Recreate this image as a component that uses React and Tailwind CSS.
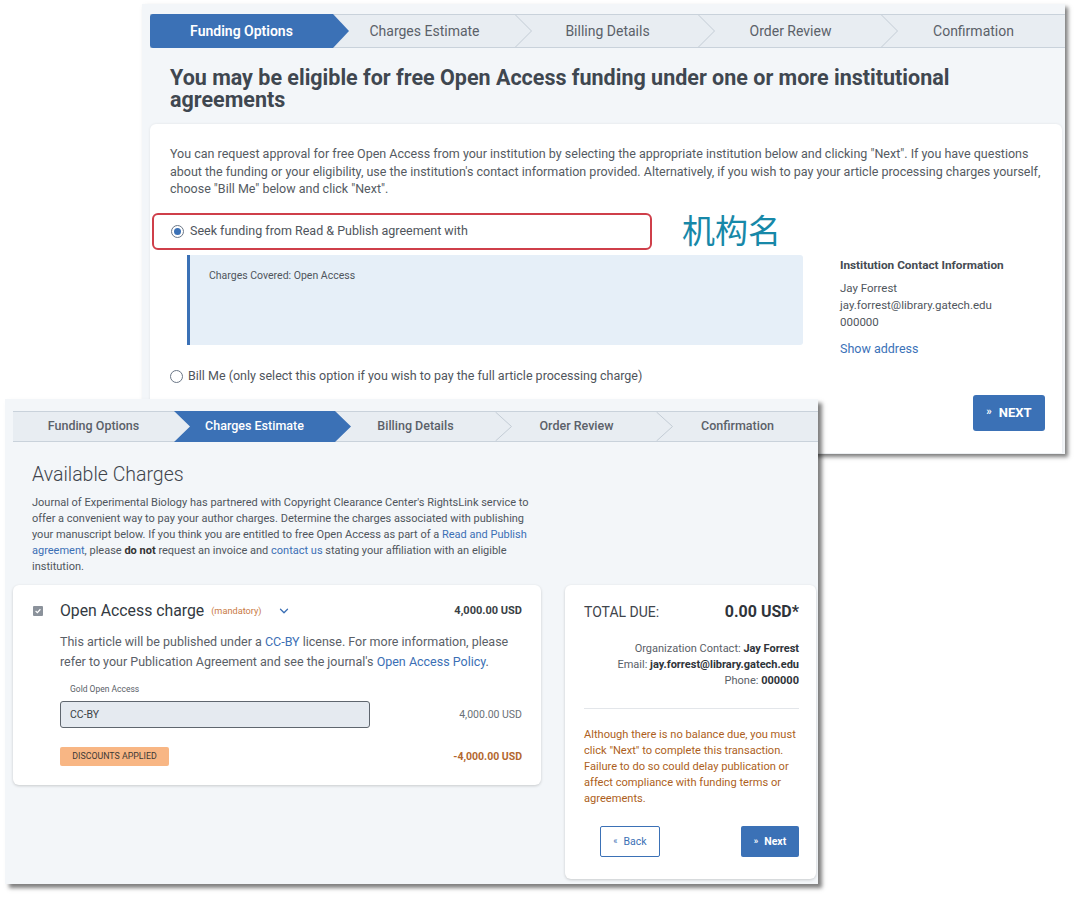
import React from "react";
import { ChevronDown } from "lucide-react";

function Stepper({ steps, active, heightCls, textCls, activeTextCls }) {
  const n = steps.length;
  return (
    <div className={`flex border-y border-[#c9d2db] bg-[#e8edf2] ${heightCls}`}>
      {steps.map((s, i) => (
        <div key={s} className="relative flex flex-1 items-center justify-center">
          {i === active && i === 0 && (
            <div className="absolute -top-px -bottom-px left-0 -right-[16px] rounded-l-[3px] bg-[#3b71b6] [clip-path:polygon(0_0,calc(100%_-_16px)_0,100%_50%,calc(100%_-_16px)_100%,0_100%)]" />
          )}
          {i === active && i !== 0 && (
            <div className="absolute -top-px -bottom-px left-0 -right-[16px] bg-[#3b71b6] [clip-path:polygon(0_0,calc(100%_-_16px)_0,100%_50%,calc(100%_-_16px)_100%,0_100%,16px_50%)]" />
          )}
          {i !== active && i !== active - 1 && i < n - 1 && (
            <svg
              className="absolute top-0 -right-[16px] h-full w-[17px]"
              viewBox="0 0 17 32"
              preserveAspectRatio="none"
            >
              <polyline
                points="0.5,0 16.5,16 0.5,32"
                fill="none"
                stroke="#c3ccd5"
                strokeWidth="1"
                vectorEffect="non-scaling-stroke"
              />
            </svg>
          )}
          <span className={`relative ${i === active ? activeTextCls : textCls}`}>{s}</span>
        </div>
      ))}
    </div>
  );
}

const STEPS = ["Funding Options", "Charges Estimate", "Billing Details", "Order Review", "Confirmation"];

function Radio({ checked }) {
  return (
    <span className="flex h-[13px] w-[13px] shrink-0 items-center justify-center rounded-full border border-[#6b7787] bg-white">
      {checked && <span className="h-[7px] w-[7px] rounded-full bg-[#3b71b6]" />}
    </span>
  );
}

function WindowA() {
  return (
    <div className="absolute left-[142px] top-[4px] h-[450px] w-[923px] bg-[#f3f6f9] pl-[8px] pt-[10px] shadow-[3px_3px_4px_rgba(0,0,0,0.5)]">
      <Stepper
        steps={STEPS}
        active={0}
        heightCls="h-[34px]"
        textCls="text-[14px] text-[#5b6169]"
        activeTextCls="text-[14px] font-semibold text-white"
      />
      <h1 className="mt-[19px] h-[44px] pl-[20px] text-[21.5px] font-bold leading-[22px] text-[#3f4750]">
        You may be eligible for free Open Access funding under one or more institutional
        <br />
        agreements
      </h1>
      <div className="mr-[3px] mt-[13px] h-[329px] rounded-t-md bg-white pl-[20px] pr-[17px] pt-[21px] shadow-[0_0_3px_rgba(0,0,0,0.08)]">
        <p className="text-[12.5px] leading-[17.5px] text-[#555b62]">
          You can request approval for free Open Access from your institution by selecting the appropriate institution below and clicking "Next". If you have questions
          <br />
          about the funding or your eligibility, use the institution's contact information provided. Alternatively, if you wish to pay your article processing charges yourself,
          <br />
          choose "Bill Me" below and click "Next".
        </p>
        <div className="relative mt-[15px]">
          <div className="-ml-[18px] flex h-[37px] w-[500px] items-center gap-[6px] rounded-md border-2 border-[#cf3f4a] pl-[17px] text-[12.5px] text-[#4f555c]">
            <Radio checked />
            <span>Seek funding from Read &amp; Publish agreement with</span>
          </div>
          <span className="absolute left-[512px] top-[-4px] font-['Noto_Sans_CJK_SC',sans-serif] text-[33px] leading-[40px] text-[#1788a8]">
            机构名
          </span>
        </div>
        <div className="mt-[5px] flex h-[90px] items-start">
          <div className="ml-[17px] h-[90px] w-[616px] rounded-r-[3px] border-l-[3px] border-[#3b71b6] bg-[#e6eff8] pl-[19px] pt-[13px] text-[10.5px] text-[#4f555c]">
            Charges Covered: Open Access
          </div>
          <div className="ml-[37px] pt-[2px] text-[#50565d]">
            <div className="text-[11.8px] font-bold text-[#454b52]">Institution Contact Information</div>
            <div className="mt-[6px] text-[11.5px] leading-[17px]">
              Jay Forrest
              <br />
              jay.forrest@library.gatech.edu
              <br />
              000000
            </div>
            <div className="mt-[9px] text-[12.5px] text-[#3b72b8]">Show address</div>
          </div>
        </div>
        <div className="mt-[23px] flex h-[18px] items-center gap-[5px] text-[12.5px] text-[#4f555c]">
          <Radio />
          <span>Bill Me (only select this option if you wish to pay the full article processing charge)</span>
        </div>
        <div className="mt-[9px] flex justify-end">
          <button className="flex h-[36px] w-[72px] items-center justify-center gap-[7px] rounded-[3px] bg-[#3b71b6] text-[13px] font-bold text-white">
            <span className="text-[11px]">»</span>
            <span>NEXT</span>
          </button>
        </div>
      </div>
    </div>
  );
}

function WindowB() {
  return (
    <div className="absolute left-[5px] top-[399px] h-[485px] w-[813px] bg-[#f3f6f9] pl-[8px] pt-[12px] shadow-[4px_4px_4px_rgba(0,0,0,0.5)]">
      <Stepper
        steps={STEPS}
        active={1}
        heightCls="h-[31px]"
        textCls="text-[12.5px] font-medium text-[#5b6169]"
        activeTextCls="text-[12.5px] font-medium text-white"
      />
      <div className="pl-[19px]">
        <h2 className="mt-[20px] text-[19.5px] font-light leading-[26px] text-[#3f454c]">Available Charges</h2>
        <p className="mt-[7px] text-[11px] leading-[16px] text-[#4f555c]">
          Journal of Experimental Biology has partnered with Copyright Clearance Center's RightsLink service to
          <br />
          offer a convenient way to pay your author charges. Determine the charges associated with publishing
          <br />
          your manuscript below. If you think you are entitled to free Open Access as part of a{" "}
          <span className="text-[#3b6fb5]">Read and Publish</span>
          <br />
          <span className="text-[#3b6fb5]">agreement</span>, please <b className="text-[#333]">do not</b> request an invoice and{" "}
          <span className="text-[#3b6fb5]">contact us</span> stating your affiliation with an eligible
          <br />
          institution.
        </p>
      </div>
      <div className="mt-[10px] flex items-start gap-[24px]">
        <div className="w-[528px] rounded-md bg-white pb-[19px] pl-[20px] pr-[19px] pt-[15px] shadow-[0_1px_3px_rgba(0,0,0,0.18)]">
          <div className="flex h-[22px] items-center">
            <span className="flex h-[10px] w-[10px] items-center justify-center rounded-[1px] bg-[#8b929b]">
              <svg viewBox="0 0 10 10" className="h-[8px] w-[8px]">
                <polyline points="2,5 4.2,7 8,2.8" fill="none" stroke="#fff" strokeWidth="1.5" />
              </svg>
            </span>
            <span className="ml-[17px] text-[15.8px] text-[#333a42]">Open Access charge</span>
            <span className="ml-[7px] text-[9.2px] text-[#c97a45]">(mandatory)</span>
            <ChevronDown className="ml-[15px] h-[14px] w-[14px] text-[#3b6fb5]" strokeWidth={2.2} />
            <span className="ml-auto text-[11px] font-bold text-[#3a3f45]">4,000.00 USD</span>
          </div>
          <div className="pl-[27px]">
            <p className="mt-[10px] text-[12.5px] leading-[20px] text-[#5a6067]">
              This article will be published under a <span className="text-[#3b6fb5]">CC-BY</span> license. For more information, please
              <br />
              refer to your Publication Agreement and see the journal's{" "}
              <span className="text-[#3b6fb5]">Open Access Policy</span>.
            </p>
            <div className="mt-[11px] pl-[10px] text-[8.5px] leading-[12px] text-[#5a6067]">Gold Open Access</div>
            <div className="mt-[6px] flex items-center">
              <div className="flex h-[27px] w-[310px] items-center rounded-[3px] border border-[#5f666e] bg-[#e5eaf0] pl-[9px] text-[10.5px] text-[#3a3f45]">
                CC-BY
              </div>
              <span className="ml-auto text-[10.5px] text-[#6a7077]">4,000.00 USD</span>
            </div>
            <div className="mt-[19px] flex items-center">
              <span className="flex h-[19px] w-[109px] items-center justify-center rounded-[2px] bg-[#f8b684] text-[8.8px] text-[#3d3a36]">
                DISCOUNTS APPLIED
              </span>
              <span className="ml-auto text-[10.5px] font-bold text-[#b3682f]">-4,000.00 USD</span>
            </div>
          </div>
        </div>
        <div className="w-[251px] rounded-md bg-white pb-[22px] pl-[19px] pr-[17px] pt-[17px] shadow-[0_1px_3px_rgba(0,0,0,0.18)]">
          <div className="flex h-[20px] items-center justify-between">
            <span className="text-[14px] text-[#3f454c]">TOTAL DUE:</span>
            <span className="text-[16px] font-bold text-[#2f343a]">0.00 USD*</span>
          </div>
          <div className="mt-[19px] text-right text-[11px] leading-[16px] text-[#5a6067]">
            Organization Contact: <b className="text-[#2f343a]">Jay Forrest</b>
            <br />
            Email: <b className="text-[#2f343a]">jay.forrest@library.gatech.edu</b>
            <br />
            Phone: <b className="text-[#2f343a]">000000</b>
          </div>
          <div className="mt-[19px] border-t border-[#e3e6ea]" />
          <p className="mt-[18px] text-[11.1px] leading-[16px] text-[#ad5f22]">
            Although there is no balance due, you must
            <br />
            click "Next" to complete this transaction.
            <br />
            Failure to do so could delay publication or
            <br />
            affect compliance with funding terms or
            <br />
            agreements.
          </p>
          <div className="mt-[19px] flex items-center justify-between pl-[16px]">
            <button className="flex h-[31px] w-[60px] items-center justify-center gap-[6px] rounded-[2px] border border-[#3b71b6] bg-white text-[10.5px] text-[#3b6fb5]">
              <span className="text-[9px]">«</span>
              <span>Back</span>
            </button>
            <button className="flex h-[31px] w-[58px] items-center justify-center gap-[6px] rounded-[2px] bg-[#3b71b6] text-[10.5px] font-bold text-white">
              <span className="text-[9px]">»</span>
              <span>Next</span>
            </button>
          </div>
        </div>
      </div>
    </div>
  );
}

export default function App() {
  return (
    <div className="relative h-[898px] w-[1080px] overflow-hidden bg-white font-[Roboto,sans-serif]">
      <WindowA />
      <WindowB />
    </div>
  );
}
